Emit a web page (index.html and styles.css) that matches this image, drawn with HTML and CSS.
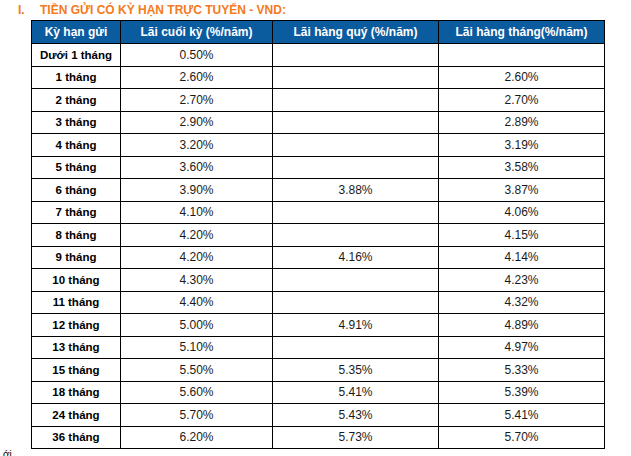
FILE: index.html
```html
<!DOCTYPE html>
<html lang="vi">
<head>
<meta charset="utf-8">
<link rel="stylesheet" href="styles.css">
</head>
<body>
<div class="title"><span class="num">I.</span><span class="text">TIỀN GỬI CÓ KỲ HẠN TRỰC TUYẾN - VND:</span></div>
<table class="rates">
<colgroup><col class="c1"><col class="c2"><col class="c3"><col class="c4"></colgroup>
<thead>
<tr><th>Kỳ hạn gửi</th><th>Lãi cuối kỳ (%/năm)</th><th>Lãi hàng quý (%/năm)</th><th>Lãi hàng tháng(%/năm)</th></tr>
</thead>
<tbody>
<tr><td class="term">Dưới 1 tháng</td><td>0.50%</td><td></td><td></td></tr>
<tr><td class="term">1 tháng</td><td>2.60%</td><td></td><td>2.60%</td></tr>
<tr><td class="term">2 tháng</td><td>2.70%</td><td></td><td>2.70%</td></tr>
<tr><td class="term">3 tháng</td><td>2.90%</td><td></td><td>2.89%</td></tr>
<tr><td class="term">4 tháng</td><td>3.20%</td><td></td><td>3.19%</td></tr>
<tr><td class="term">5 tháng</td><td>3.60%</td><td></td><td>3.58%</td></tr>
<tr><td class="term">6 tháng</td><td>3.90%</td><td>3.88%</td><td>3.87%</td></tr>
<tr><td class="term">7 tháng</td><td>4.10%</td><td></td><td>4.06%</td></tr>
<tr><td class="term">8 tháng</td><td>4.20%</td><td></td><td>4.15%</td></tr>
<tr><td class="term">9 tháng</td><td>4.20%</td><td>4.16%</td><td>4.14%</td></tr>
<tr><td class="term">10 tháng</td><td>4.30%</td><td></td><td>4.23%</td></tr>
<tr><td class="term">11 tháng</td><td>4.40%</td><td></td><td>4.32%</td></tr>
<tr><td class="term">12 tháng</td><td>5.00%</td><td>4.91%</td><td>4.89%</td></tr>
<tr><td class="term">13 tháng</td><td>5.10%</td><td></td><td>4.97%</td></tr>
<tr><td class="term">15 tháng</td><td>5.50%</td><td>5.35%</td><td>5.33%</td></tr>
<tr><td class="term">18 tháng</td><td>5.60%</td><td>5.41%</td><td>5.39%</td></tr>
<tr><td class="term">24 tháng</td><td>5.70%</td><td>5.43%</td><td>5.41%</td></tr>
<tr><td class="term">36 tháng</td><td>6.20%</td><td>5.73%</td><td>5.70%</td></tr>
</tbody>
</table>
<div class="foot">ới</div>
</body>
</html>
```
FILE: styles.css
```css
html, body {
  margin: 0;
  padding: 0;
  background: #fff;
}
body {
  font-family: "Liberation Sans", Arial, sans-serif;
  color: #1a1a1a;
  width: 631px;
  height: 456px;
  overflow: hidden;
}
.title {
  display: flex;
  height: 20px;
  padding-left: 18px;
  font-size: 12px;
  font-weight: bold;
  line-height: 20px;
  color: #f47a20;
}
.title .num {
  width: 22px;
}
.rates {
  margin-left: 31px;
  width: 573px;
  border-collapse: collapse;
  table-layout: fixed;
  font-size: 12px;
}
.c1 { width: 89px; }
.c2 { width: 152px; }
.c3 { width: 166px; }
.c4 { width: 166px; }
.rates th,
.rates td {
  border: 1px solid #000;
  padding: 0;
  text-align: center;
  white-space: nowrap;
}
.rates th {
  background: #0b5b9f;
  color: #fff;
  font-weight: bold;
  height: 22px;
  font-size: 12px;
}
.rates td {
  height: 21.5px;
}
.rates td.term {
  font-weight: bold;
  font-size: 11.5px;
  color: #000;
}
.foot {
  font-size: 10px;
  line-height: 12px;
  padding-left: 3px;
  color: #000;
}
```
